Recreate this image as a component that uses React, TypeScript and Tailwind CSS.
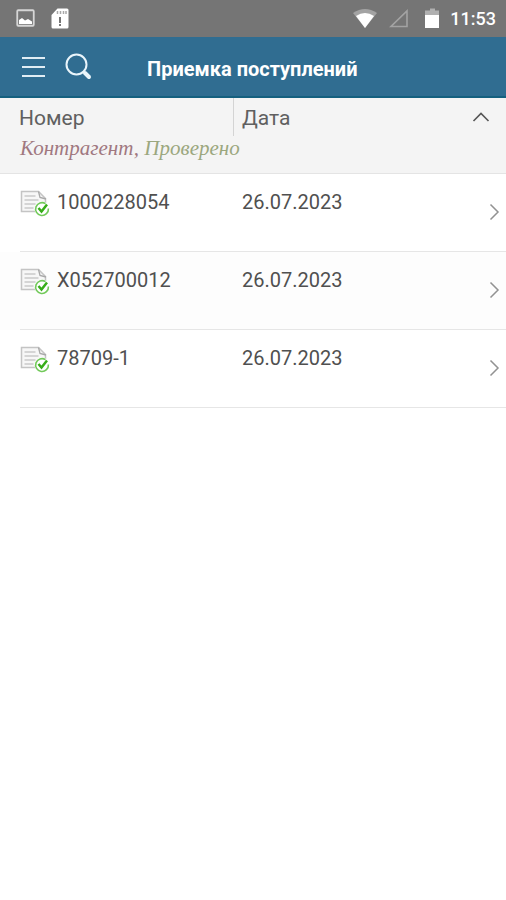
import React from "react";

type Receipt = { id: string; number: string; date: string };

const receipts: Receipt[] = [
  { id: "r1", number: "1000228054", date: "26.07.2023" },
  { id: "r2", number: "X052700012", date: "26.07.2023" },
  { id: "r3", number: "78709-1", date: "26.07.2023" },
];

function StatusBar() {
  return (
    <div className="flex h-[37px] items-center bg-[#757575] pr-[10px] pl-4 text-white">
      <svg className="h-5 w-5" viewBox="0 0 20 20" aria-hidden="true">
        <rect x="1.25" y="1.25" width="16.5" height="15.5" rx="1" fill="none" stroke="#d6d6d6" strokeWidth="1.8" />
        <path d="M3 15v-4l3-2 3 2.500 3-1.500 4 2.500v2.500z" fill="#fff" />
      </svg>
      <svg className="ml-[15px] h-6 w-[18px]" viewBox="0 0 18 24" aria-hidden="true">
        <path d="M6.500 1.500h9.500a1.500 1.500 0 0 1 1.500 1.500v17a1.500 1.500 0 0 1-1.500 1.500H2A1.500 1.500 0 0 1 .5 20V8z" fill="#fff" />
        <path d="M6.500 4v3M9.500 4v3M12.500 4v3M15 4v3" stroke="#a8a8a8" strokeWidth="1.500" />
        <path d="M9 10v6M9 17v2" stroke="#757575" strokeWidth="2" />
      </svg>
      <div className="ml-auto flex items-center">
        <svg className="h-5 w-6" viewBox="0 0 24 20" aria-hidden="true">
          <path d="M0 4Q12-4 24 4L12 19z" fill="#a3a3a3" />
          <path d="M3 7q9-6 18 0l-9 12z" fill="#fff" />
        </svg>
        <svg className="ml-3 h-5 w-5" viewBox="0 0 20 20" aria-hidden="true">
          <path d="M18 2v15.500H2z" fill="none" stroke="#a3a3a3" strokeWidth="1.600" />
        </svg>
        <svg className="ml-4 h-[22px] w-[15px]" viewBox="0 0 15 22" aria-hidden="true">
          <path d="M0 2.500h5V.5h5v2h4V9H0z" fill="#b0b0b0" />
          <path d="M0 7h14v13H0z" fill="#fff" />
        </svg>
        <span className="ml-[10px] text-[18px] leading-6 font-medium">11:53</span>
      </div>
    </div>
  );
}

function AppBar() {
  return (
    <header className="flex h-[61px] items-center border-b-2 border-[#15607f] bg-[#306d91] pl-[21px] text-white">
      <button type="button" aria-label="Меню">
        <svg className="block h-6 w-6" viewBox="0 0 24 24" fill="none" stroke="#e0edf4" strokeWidth="2" aria-hidden="true">
          <path d="M1 3h23M1 12h23M1 21h23" />
        </svg>
      </button>
      <button type="button" aria-label="Поиск" className="ml-5">
        <svg className="block h-7 w-7" viewBox="0 0 28 28" fill="none" stroke="#e9f5fb" aria-hidden="true">
          <circle cx="11.500" cy="11.500" r="10" strokeWidth="2" />
          <path d="M18.500 18.500l2 2" strokeWidth="2" />
          <path d="M20 20l4 4" strokeWidth="4" strokeLinecap="round" />
        </svg>
      </button>
      <h1 className="ml-[54px] pt-1 text-[20px] leading-6 font-bold">Приемка поступлений</h1>
    </header>
  );
}

function ColumnHeader() {
  return (
    <div className="h-[76px] border-b border-[#e4e4e4] bg-[#f4f4f4]">
      <div className="flex h-[38px] text-[21px] leading-10 text-[#606060]">
        <div className="w-[234px] border-r border-[#d4d4d4] pl-[19px]">Номер</div>
        <div className="pl-2">Дата</div>
        <button type="button" aria-label="Свернуть" className="mr-4 ml-auto">
          <svg className="block h-[18px] w-[18px]" viewBox="0 0 18 18" fill="none" stroke="#555" strokeWidth="1.600" aria-hidden="true">
            <path d="M1.500 13L9 5.500l7.500 7.500" />
          </svg>
        </button>
      </div>
      <p className="pl-5 font-['Liberation_Serif',serif] text-[21px] leading-6 text-[#a07880] italic">
        Контрагент, <span className="text-[#9ba77e]">Проверено</span>
      </p>
    </div>
  );
}

function CheckedDocument() {
  return (
    <svg className="block h-7 w-[30px]" viewBox="0 0 30 28" fill="none" aria-hidden="true">
      <path d="M1.500 1.500h17l7 7v13h-24z" fill="#f7f7f7" stroke="#c4c4c4" strokeWidth="1.500" />
      <path d="M18.500 1.500l1.500 6 6 1.500" stroke="#a8a8a8" strokeWidth="1.300" />
      <path d="M4.500 6h11M4.500 10h14M4.500 14h11M4.500 18h9" stroke="#cacaca" strokeWidth="1.500" />
      <circle cx="22" cy="19" r="7.500" fill="#fff" />
      <path d="M25.500 13.700a6.400 6.400 0 1 0 2.900 4.800" stroke="#72c95a" strokeWidth="1.600" />
      <path d="M18.500 18l3 3.500 5.500-7" stroke="#37ad19" strokeWidth="2.500" />
    </svg>
  );
}

function ReceiptRow({ receipt }: { receipt: Receipt }) {
  return (
    <li className="pl-5 even:bg-[#fdfdfd]">
      <button type="button" className="flex h-[78px] w-full border-b border-[#e6e6e6] pr-1 text-left text-[20px] leading-6 text-[#505050]">
        <span className="flex w-[222px] pt-4">
          <CheckedDocument />
          <span className="pl-[7px]">{receipt.number}</span>
        </span>
        <span className="pt-4">{receipt.date}</span>
        <svg className="mt-[29px] ml-auto h-[18px] w-4" viewBox="0 0 16 18" fill="none" stroke="#929292" strokeWidth="1.500" aria-hidden="true">
          <path d="M4.500 1.500L12 9l-7.500 7.500" />
        </svg>
      </button>
    </li>
  );
}

export default function App() {
  return (
    <div className="min-h-screen bg-white font-[Roboto,sans-serif]">
      <StatusBar />
      <AppBar />
      <main>
        <ColumnHeader />
        <ul>
          {receipts.map((receipt) => (
            <ReceiptRow key={receipt.id} receipt={receipt} />
          ))}
        </ul>
      </main>
    </div>
  );
}
